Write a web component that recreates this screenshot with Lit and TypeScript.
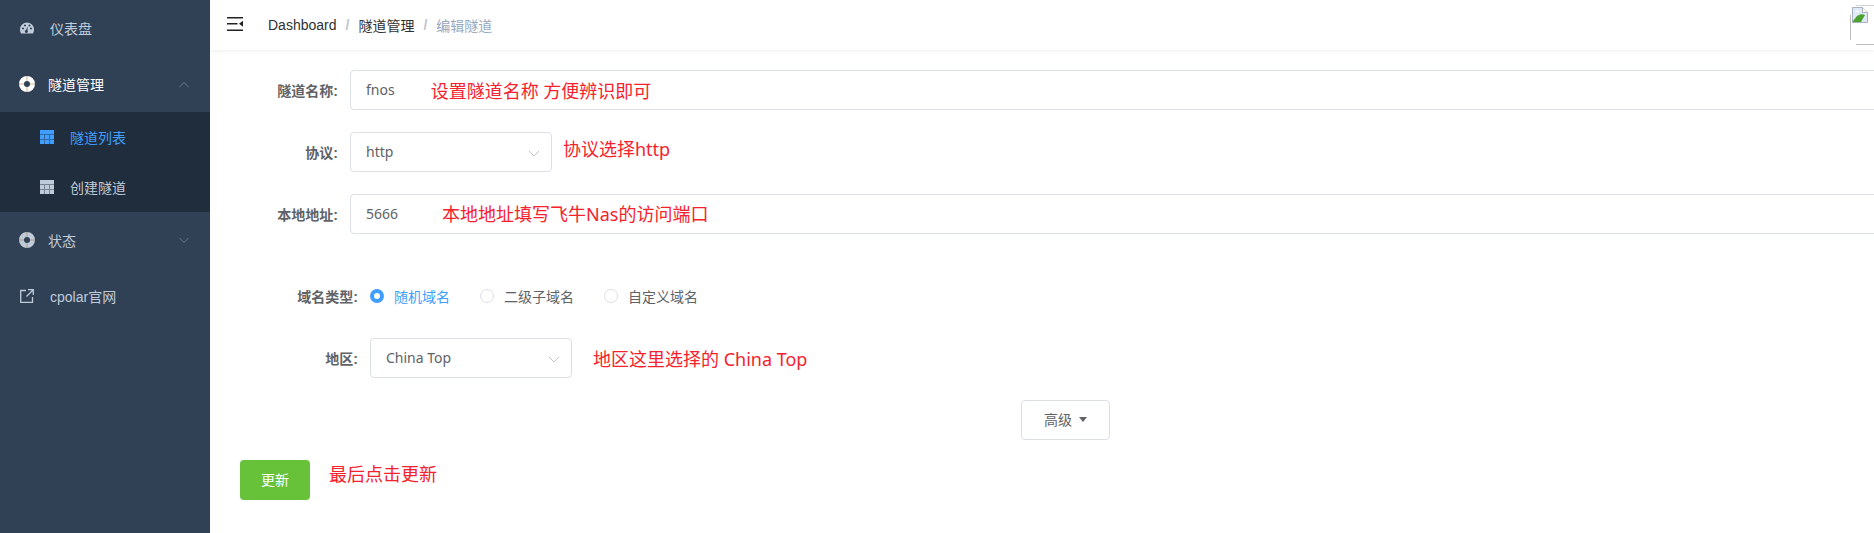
import { LitElement, html, css, svg } from "lit";
import { customElement } from "lit/decorators.js";

const chev = (up: boolean) => html`<svg class="chev" width="12" height="12" viewBox="0 0 12 12"><path d="${up ? "M1.5 8 L6 3.5 L10.5 8" : "M1.5 4 L6 8.5 L10.5 4"}" fill="none" stroke="currentColor" stroke-width="1"/></svg>`;
const ring = html`<svg class="ring" width="16" height="16" viewBox="0 0 16 16"><path fill-rule="evenodd" fill="currentColor" d="M8 0a8 8 0 1 1 0 16A8 8 0 0 1 8 0zm0 5a3 3 0 1 0 0 6 3 3 0 0 0 0-6z"/><path d="M0 8h5M11 8h5M8 0v5M8 11v5" stroke="#a9743f" stroke-width=".9" opacity=".6"/></svg>`;
const grid = html`<svg class="grid" width="14" height="14" viewBox="0 0 14 14"><path fill="currentColor" d="M0 0h14v14H0z"/><path d="M0 4.500h14M0 9.500h14M4.500 4v10M9.500 4v10" stroke="#1f2d3d" stroke-width="1" opacity=".45"/></svg>`;
const gauge = html`<svg class="gauge" width="14" height="12" viewBox="0 0 14 12"><path fill-rule="evenodd" fill="currentColor" d="M7 0.5a7 7 0 0 1 7 7c0 1.600-.4 3-1.200 4H1.200C.4 10.500 0 9.100 0 7.500a7 7 0 0 1 7-7zM3 5.500a1 1 0 1 0 0 2 1 1 0 0 0 0-2zM5 2.500a1 1 0 1 0 0 2 1 1 0 0 0 0-2zM9.500 2.500a1 1 0 1 0 0 2 1 1 0 0 0 0-2zM11 5.500a1 1 0 1 0 0 2 1 1 0 0 0 0-2zM7.800 4.500L6 8a1.500 1.500 0 1 0 1.500.500z"/></svg>`;
const ext = html`<svg class="ext" width="14" height="14" viewBox="0 0 14 14"><path d="M6 1.500H.7v11.800h11.800V8M8 .7h5.300V6M13 1L6.500 7.500" fill="none" stroke="currentColor" stroke-width="1.300"/></svg>`;
const hamburger = svg`<path d="M0 .75h16M0 6.750h10.500M0 13.250h16" stroke="#222" stroke-width="1.500" fill="none"/><path d="M12 6.750l4-3v6z" fill="#222"/>`;
const selChev = html`<svg class="selchev" width="12" height="12" viewBox="0 0 12 12"><path d="M1 4 L6 9 L11 4" fill="none" stroke="#c0c4cc" stroke-width="1"/></svg>`;

@customElement("app-root")
export class AppRoot extends LitElement {
  static styles = css`
    :host { display: flex; width: 1874px; height: 533px; overflow: hidden; background: #fff;
      font-family: "Liberation Sans", "Noto Sans CJK SC", sans-serif; font-size: 14px; color: #606266; }
    .side { width: 210px; flex: none; background: #304156; color: #bfcbd9; }
    .item { height: 56px; display: flex; align-items: center; padding-left: 20px; position: relative; }
    .item.open { color: #fff; }
    .item .ring { margin-left: -1px; margin-right: 13px; flex: none; }
    .item .gauge { margin-right: 16px; flex: none; }
    .item .ext { margin-right: 16px; flex: none; }
    .chev { position: absolute; left: 178px; top: 22px; color: #6d7a8b; }
    .item.open .chev { top: 23px; }
    .sub { background: #1f2d3d; }
    .subitem { height: 50px; display: flex; align-items: center; padding-left: 40px; gap: 16px; }
    .subitem.active { color: #409eff; }
    .main { flex: 1; min-width: 0; overflow: hidden; display: flex; flex-direction: column; }
    .top { height: 50px; flex: none; display: flex; align-items: center; box-shadow: 0 1px 4px rgba(0,21,41,.08); position: relative; }
    .ham { margin: 0 25px 2px 17px; flex: none; }
    .crumb { color: #303133; display: flex; align-items: center; }
    .crumb .sep { color: #c0c4cc; margin: 0 9px; font-weight: 700; }
    .crumb .last { color: #97a8be; }
    .avatar { position: absolute; left: 1640px; top: 5px; width: 40px; height: 40px; }
    .avatar .edge { position: absolute; left: 6px; right: 0; top: 0; bottom: 0; border-top: 1px solid #d4d4d4; border-bottom: 1px solid #bdbdbd; }
    .avatar .leftline { position: absolute; left: 0; top: 10px; bottom: 5px; width: 1px; background: #bdbdbd; }
    .avatar svg { position: absolute; left: 2px; top: 2px; }
    .form { padding: 20px 0 0 30px; width: 1760px; box-sizing: border-box; }
    .row { display: flex; align-items: center; height: 40px; margin-bottom: 22px; }
    .row.spaced { margin-bottom: 42px; }
    .label { width: 98px; margin-right: 12px; flex: none; text-align: right; font-weight: 700; white-space: nowrap; }
    .label.wide { width: 118px; }
    .box { height: 40px; box-sizing: border-box; border: 1px solid #dcdfe6; border-radius: 4px; display: flex; align-items: center; padding-left: 15px; background: #fff; flex: none; }
    .val { font-family: "Noto Sans", "Noto Sans CJK SC", sans-serif; margin-bottom: 2px; }
    .box.full { width: 1650px; }
    .box.sel { width: 202px; position: relative; }
    .selchev { position: absolute; right: 11px; top: 14px; }
    .note { font-family: "Noto Sans", "Noto Sans CJK SC", sans-serif; color: #f5222d; font-size: 18px; line-height: 24px; white-space: nowrap; font-weight: 400; }
    .n1 { margin-left: 36px; position: relative; top: 1px; }
    .n2 { margin-left: 11px; position: relative; top: -3px; }
    .n3 { margin-left: 44px; position: relative; top: 0; }
    .n4 { margin-left: 21px; position: relative; top: 1px; }
    .n5 { margin-left: 19px; position: relative; top: -6px; }
    .radio { display: flex; align-items: center; margin-right: 30px; }
    .dot { width: 14px; height: 14px; box-sizing: border-box; border: 1px solid #dcdfe6; border-radius: 50%; margin-right: 10px; background: #fff; }
    .radio.on { color: #409eff; }
    .radio.on .dot { border: 4.500px solid #409eff; }
    .center { display: flex; justify-content: center; width: 1651px; height: 40px; margin-bottom: 20px; }
    .btn { width: 89px; height: 40px; box-sizing: border-box; border: 1px solid #dcdfe6; border-radius: 4px; padding-bottom: 2px; display: flex; align-items: center; justify-content: center; gap: 7px; color: #606266; background: #fff; }
    .caret { width: 0; height: 0; border: 4.500px solid transparent; border-top: 5px solid #606266; border-bottom: 0; }
    .submit-row { display: flex; align-items: center; height: 40px; }
    .submit { width: 70px; height: 40px; box-sizing: border-box; padding-bottom: 2px; border-radius: 4px; background: #67c23a; color: #fff; font-size: 14px; display: flex; align-items: center; justify-content: center; }
  `;

  render() {
    return html`
      <aside class="side">
        <div class="item">${gauge}<span>仪表盘</span></div>
        <div class="item open">${ring}<span>隧道管理</span>${chev(true)}</div>
        <div class="sub">
          <div class="subitem active">${grid}<span>隧道列表</span></div>
          <div class="subitem">${grid}<span>创建隧道</span></div>
        </div>
        <div class="item">${ring}<span>状态</span>${chev(false)}</div>
        <div class="item">${ext}<span>cpolar官网</span></div>
      </aside>
      <div class="main">
        <header class="top">
          <svg class="ham" width="16" height="14" viewBox="0 0 16 14">${hamburger}</svg>
          <div class="crumb">
            <span>Dashboard</span><span class="sep">/</span><span>隧道管理</span><span class="sep">/</span><span class="last">编辑隧道</span>
          </div>
          <div class="avatar">
            <div class="edge"></div>
            <div class="leftline"></div>
            <svg width="16" height="16" viewBox="0 0 16 16">
              <path d="M.5.500h10l5 5v10H.5z" fill="#dfe9f8" stroke="#a9b1bd"/>
              <path d="M10.500.500v5h5" fill="#fff" stroke="#a9b1bd"/>
              <path d="M1 14l4-5c3-2 6-2 8-1l-4 7H1z" fill="#4da32f"/>
              <path d="M3 5c1-2 3-2 4 0z" fill="#fff"/>
            </svg>
          </div>
        </header>
        <div class="form">
          <div class="row">
            <span class="label">隧道名称:</span>
            <div class="box full"><span class="val">fnos</span><span class="note n1">设置隧道名称 方便辨识即可</span></div>
          </div>
          <div class="row">
            <span class="label">协议:</span>
            <div class="box sel"><span class="val">http</span>${selChev}</div>
            <span class="note n2">协议选择http</span>
          </div>
          <div class="row spaced">
            <span class="label">本地地址:</span>
            <div class="box full"><span class="val">5666</span><span class="note n3">本地地址填写飞牛Nas的访问端口</span></div>
          </div>
          <div class="row">
            <span class="label wide">域名类型:</span>
            <div class="radio on"><span class="dot"></span><span>随机域名</span></div>
            <div class="radio"><span class="dot"></span><span>二级子域名</span></div>
            <div class="radio"><span class="dot"></span><span>自定义域名</span></div>
          </div>
          <div class="row">
            <span class="label wide">地区:</span>
            <div class="box sel"><span class="val">China Top</span>${selChev}</div>
            <span class="note n4">地区这里选择的 China Top</span>
          </div>
          <div class="center"><div class="btn"><span>高级</span><span class="caret"></span></div></div>
          <div class="submit-row">
            <div class="submit">更新</div>
            <span class="note n5">最后点击更新</span>
          </div>
        </div>
      </div>
    `;
  }
}
